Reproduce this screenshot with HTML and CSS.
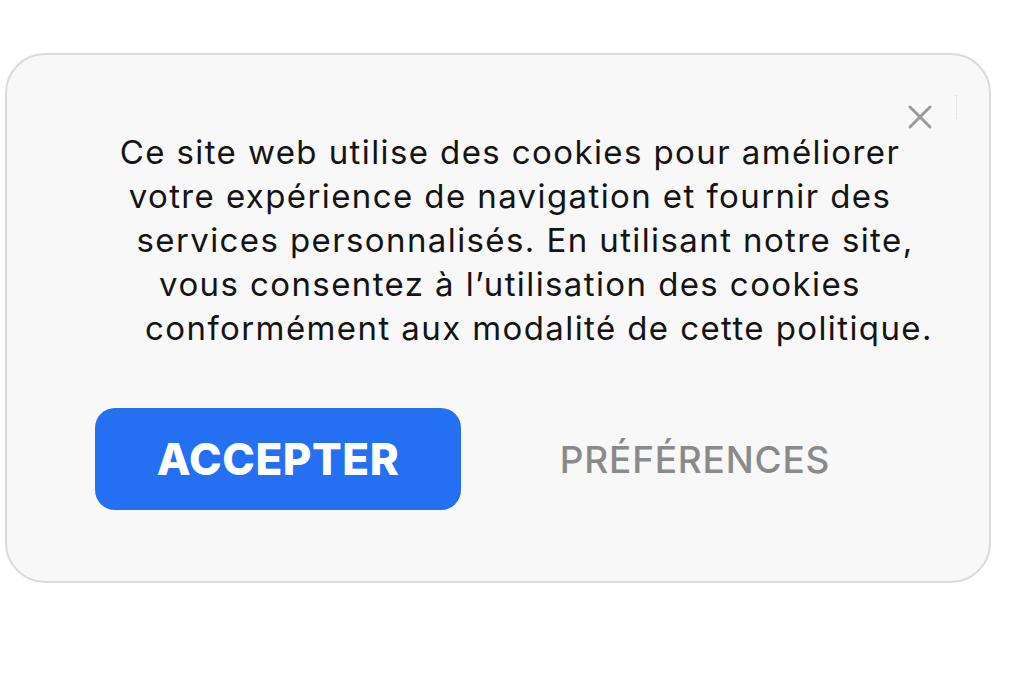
FILE: index.html
```html
<html>
<head>
    <title>Cookies</title>
    <link rel="stylesheet" href="styles.css">
</head>
<body>
    <div class="page">
        <div class="card">
            <button class="close" aria-label="Fermer">
                <svg width="26" height="26" viewBox="0 0 26 26">
                    <path d="M3 3 L23 23 M23 3 L3 23" stroke="#9b9b9b" stroke-width="3" stroke-linecap="round"/>
                </svg>
            </button>
            <span class="mark"></span>
            <p class="message">
                <span class="line">Ce site web utilise des cookies pour améliorer</span>
                <span class="line">votre expérience de navigation et fournir des</span>
                <span class="line shift-a">services personnalisés. En utilisant notre site,</span>
                <span class="line">vous consentez à l’utilisation des cookies</span>
                <span class="line shift-b">conformément aux modalité de cette politique.</span>
            </p>
            <div class="actions">
                <button class="btn accept">ACCEPTER</button>
                <button class="btn prefs">PRÉFÉRENCES</button>
            </div>
        </div>
    </div>
</body>
</html>
```

FILE: styles.css
```css
body {
    margin: 0;
    padding: 0;
    background: #ffffff;
    font-family: Inter, "Noto Sans", sans-serif;
}
.page {
    padding: 53px 0 0 5px;
}
.card {
    position: relative;
    box-sizing: border-box;
    width: 986px;
    height: 530px;
    background: #f8f8f8;
    border: 2px solid #dadada;
    border-radius: 40px;
    padding: 75px 0 0 88px;
}
.close {
    position: absolute;
    top: 49px;
    right: 56px;
    width: 26px;
    height: 26px;
    padding: 0;
    border: none;
    background: none;
    cursor: pointer;
}
.mark {
    position: absolute;
    top: 40px;
    right: 32px;
    width: 1px;
    height: 22px;
    border: 1px solid #e6e6e6;
    border-left: none;
}
.message {
    margin: 0 0 0 -88px;
    width: 1006px;
    text-align: center;
    font-size: 33px;
    line-height: 44px;
    color: #141414;
    letter-spacing: 1.4px;
}
.line {
    display: block;
}
.shift-a {
    padding-left: 30px;
}
.shift-b {
    padding-left: 58px;
}
.actions {
    display: flex;
    gap: 51px;
    margin-top: 58px;
}
.btn {
    width: 366px;
    height: 102px;
    border: none;
    border-radius: 20px;
    cursor: pointer;
    font-family: Inter, sans-serif;
}
.accept {
    background: #2570f2;
    color: #ffffff;
    font-size: 44px;
    font-weight: 800;
    letter-spacing: 0.5px;
}
.prefs {
    background: none;
    color: #8a8a8a;
    font-size: 37px;
    font-weight: 500;
    letter-spacing: 0.8px;
}
```
